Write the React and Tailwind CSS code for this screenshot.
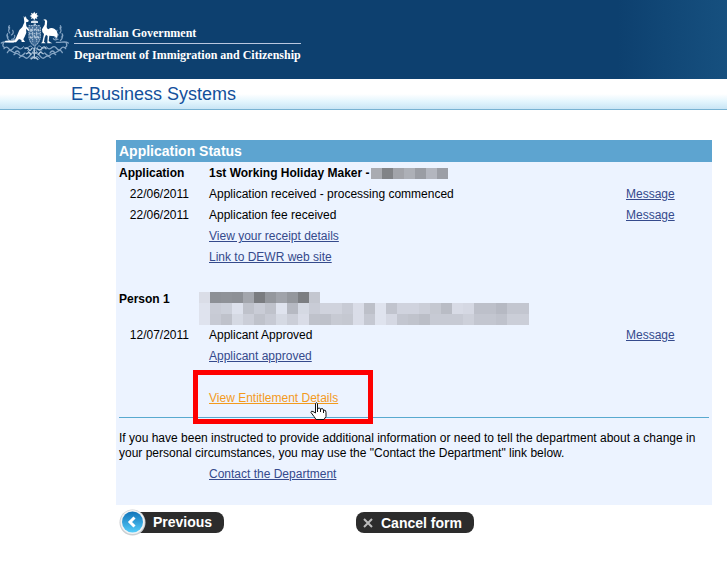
const link = 'text-[#354a8c] underline';

const nameMosaic = [['#a9abb1', '#818387', '#a2a4aa', '#adb0b7', '#9a9da4', '#b3b6bf', '#9b9ea6']];
const personMosaic = [
  ['#dadde7', '#8d9096', '#8f9298', '#8d9096', '#a3a6ad', '#7a7c80', '#94979d', '#a0a3aa', '#94979d', '#7c7e82', '#c4c7d0'],
  ['#dfe3ee', '#c9ccd6', '#ccd0da', '#dde1ec', '#bfc2cb', '#c9ccd6', '#bfc2cb', '#dfe3ee', '#b6b9c2', '#d5d9e3', '#c9ccd6', '#d0d3dd', '#d0d3dd', '#c8cbd5', '#dadde8', '#bdc0c9', '#dfe3ee', '#c1c4ce', '#d0d3de', '#d0d3de', '#cbced8', '#c5c8d1', '#b9bcc5', '#d8dbe6', '#d5d8e3', '#bdc0ca', '#bdc0ca', '#b6b9c3', '#c3c6d0', '#c3c6d0'],
  ['#dfe3ee', '#c7cad4', '#bfc2cb', '#d5d9e3', '#cbced8', '#bfc2cb', '#c7cad4', '#d5d9e3', '#cbced8', '#d9dce7', '#bfc2cb', '#bec1ca', '#c7cad3', '#c5c8d1', '#dadde8', '#c5c8d2', '#dfe3ee', '#d5d8e3', '#c3c6d0', '#c0c3cc', '#bbbec7', '#c7cad4', '#c7cad4', '#c7cad4', '#cdd0da', '#c3c6d0', '#c3c6d0', '#bfc2cc', '#cbced8', '#cbced8'],
];

function Mosaic({ rows, className }) {
  const columns = Math.max(...rows.map((row) => row.length));
  return (
    <svg className={className} width={columns * 11} height={rows.length * 11} shapeRendering="crispEdges" aria-hidden="true">
      {rows.map((row, y) =>
        row.map((fill, x) => <rect key={`${x}-${y}`} x={x * 11} y={y * 11} width="11" height="11" fill={fill} />),
      )}
    </svg>
  );
}

function Foliage() {
  return (
    <g fill="none" stroke="#86a5c4" strokeWidth="3" strokeLinecap="round">
      <path d="M4 105C14 98 25 105 40 103M10 107q-4 8 3 11M12 122q8-9 14 0t14-2q6-8 14-1t14 0M22 134q4-10 12-5t10 6q8-12 15 0M42 140q8-8 15 0t18-5M58 149q8-9 16-1t18-8" strokeWidth="4" />
      <path d="M28 98q-8-7-6-18M25 87q-8-1-2-10M29 75q-6-6 0-17M34 81q9-5 4-14M35 94q11-2 9-12M29 63q-6-4-1-10M40 95q6 2 9-3" strokeWidth="3.5" />
      <path d="M70 116q8 10 16 1t14 7q4-7 6-11M83 128l11 10 8-12M91 151q8-12 12 0" />
    </g>
  );
}

function Crest() {
  return (
    <svg className="mt-2 h-[60px] w-[75px] shrink-0" viewBox="0 0 225 180" role="img" aria-label="Australian coat of arms">
      <Foliage />
      <g transform="translate(209 0) scale(-1 1)"><Foliage /></g>
      <path d="M86 52h35v40q-3 17-17 24-15-7-18-24z" fill="#416c97" />
      <g fill="none" stroke="#b3c8dc" strokeWidth="3">
        <path d="M86 53h34M87 57v32q3 17 17 24 13-7 17-24V57M87 77h32M98 57v44M110 57v44" strokeDasharray="5 2" />
        <path d="M91 66h6M93 62v9M102 67l5-4M113 64l4 5M90 86l5 5M102 82l5 9M112 85l5 6M101 49h7" strokeWidth="5" />
      </g>
      <path d="M103 11l3 6 6-3-2 7 6 3-6 3 2 6-6-2-3 6-4-6-6 2 2-6-6-3 6-3-2-7 6 3z" fill="#fff" />
      <path d="M93 40q10-5 21 0v5H93z" fill="#d9e4ee" />
      <path d="M71 24l4 5 2-5 3 8 6 5-1 4-7 2 1 12 5 5 4 7-3 2-7-7 1 12-5 12-4 8 5 8h-10l-1-6-7-3-9 10H17l-3-3 3-2 28-1 8-19q3-13 14-21l6-14-1-9z" fill="#fff" />
      <path d="M126 42l4-6q4-4 9-1 4 3 2 12l-1 10q1 6 5 7 8-7 19-1 9 6 9 20l-2 8-7-6-8-1-8-1-2 16 5 4 6 3h-15l1-22-5-4-4 9-2 12 5 5h-14l4-4 3-14 2-10q-7-5-6-14l8-14 1-11-4-4z" fill="#fff" />
      <g fill="none" stroke="#b3c8dc" strokeWidth="4">
        <path d="M74 122q8-6 12 2t10-4M111 121q8 10 15 0t13 3M78 138l9-5 7 8M113 141l8-9 10 6M103 119v33M92 154l11-8 12 9M97 135h14" />
      </g>
    </svg>
  );
}

function Hand() {
  return (
    <svg className="h-[18px] w-[17px]" viewBox="0 0 17 18" aria-hidden="true">
      <path d="M5.5 11V1.5q1-1.5 2 0v5l2-.5 1 1 2-.5 1 1.5 2 .5.5 2v4l-2 3H6l-2-3-3-4q0-2 2-1z" fill="#fff" stroke="#111" />
      <path d="M7.500 6v4M10.500 7v3M13.500 8v3" stroke="#111" fill="none" />
    </svg>
  );
}

function Event({ date, text }) {
  return (
    <tr className="h-[21px]">
      <td className="pr-5! text-right">{date}</td>
      <td>{text}</td>
      <td><a href="#message" className={link}>Message</a></td>
    </tr>
  );
}

function LinkRow({ children }) {
  return (
    <tr className="h-[21px]">
      <td />
      <td colSpan={2}><a href="#details" className={link}>{children}</a></td>
    </tr>
  );
}

export default function App() {
  return (
    <div className="bg-white font-['Liberation_Sans',Arial,sans-serif] text-xs leading-[15px] text-black">
      <header>
        <div className="flex h-[79px] bg-[linear-gradient(to_right,#0d406f_0%,#0d406f_85%,#16507f_100%)]">
          <Crest />
          <div className="-ml-px pt-[25px] font-['Liberation_Serif',serif] text-xs leading-[17px] font-bold text-white">
            <p className="border-b border-[#b8c7df] pb-px">Australian Government</p>
            <p className="pt-[3px]">Department of Immigration and Citizenship</p>
          </div>
        </div>
        <div className="h-[31px] border-b border-[#78b2d2] bg-[linear-gradient(to_bottom,#fff_50%,#e3f5fd_75%,#c9e5f5_100%)] pl-[71px]">
          <h1 className="text-lg leading-[30px] text-[#124f9b]">E-Business Systems</h1>
        </div>
      </header>
      <main className="mt-[30px] mr-[15px] ml-[116px]">
        <section className="bg-[#ecf3ff] pb-5">
          <h2 className="bg-[#5da4d0] pl-[3px] text-sm leading-[22px] font-bold text-white">Application Status</h2>
          <table className="w-full table-fixed border-collapse [&_td]:p-0 [&_th]:p-0">
            <colgroup><col className="w-[93px]" /><col /><col className="w-[86px]" /></colgroup>
            <tbody>
              <tr className="h-[22px]">
                <th scope="row" className="pl-[3px]! text-left">Application</th>
                <td colSpan={2} className="font-bold">
                  <span className="flex items-center gap-0.5">1st Working Holiday Maker - <Mosaic rows={nameMosaic} /></span>
                </td>
              </tr>
              <Event date="22/06/2011" text="Application received - processing commenced" />
              <Event date="22/06/2011" text="Application fee received" />
              <LinkRow>View your receipt details</LinkRow>
              <LinkRow>Link to DEWR web site</LinkRow>
              <tr className="h-5"><td colSpan={3} /></tr>
              <tr className="h-[37px] align-top">
                <th scope="row" className="pt-1! pl-[3px]! text-left">Person 1</th>
                <td colSpan={2} className="pt-1!"><Mosaic rows={personMosaic} className="-ml-[10px] block max-w-none" /></td>
              </tr>
              <Event date="12/07/2011" text="Applicant Approved" />
              <LinkRow>Applicant approved</LinkRow>
              <tr className="h-[21px]"><td colSpan={3} /></tr>
            </tbody>
          </table>
          <div className="relative z-10 mx-[3px] h-[30px] border-b border-[#58a9cf] pt-[3px] pl-[90px]">
            <div className="relative w-fit">
              <a href="#entitlement" className="text-[#f39a1d] underline">View Entitlement Details</a>
              <span className="pointer-events-none absolute -top-[21px] -left-4 h-[54px] w-[180px] border-5 border-[#fe0000]" />
              <span className="pointer-events-none absolute top-[11px] left-[101px]"><Hand /></span>
            </div>
          </div>
          <p className="px-[3px] pt-[13px]">If you have been instructed to provide additional information or need to tell the department about a change in your personal circumstances, you may use the "Contact the Department" link below.</p>
          <p className="pt-[6px] pb-[3px] pl-[93px]"><a href="#contact" className={link}>Contact the Department</a></p>
        </section>
        <div className="flex gap-[132px] pt-1 pl-[3px] text-sm font-bold text-white">
          <button type="button" className="flex h-[27px] w-[105px] items-center">
            <svg className="relative z-10 size-[27px] shrink-0" viewBox="0 0 27 27" aria-hidden="true">
              <defs><linearGradient id="blue" x2="0" y2="1"><stop stopColor="#1173b9" /><stop offset="1" stopColor="#55cdfa" /></linearGradient></defs>
              <circle cx="13.500" cy="13.500" r="13" fill="#cbcfd2" /><circle cx="13.500" cy="13" r="12" fill="#f2f3f4" />
              <circle cx="13.500" cy="13" r="10.500" fill="url(#blue)" />
              <path d="M15.500 8.500 11 13l4.500 4.500" fill="none" stroke="#fff" strokeWidth="3" />
            </svg>
            <span className="-ml-3 h-[21px] grow rounded-r-lg bg-[#2c2c2c] pl-[19px] text-left leading-[20px]">Previous</span>
          </button>
          <button type="button" className="mt-[3px] flex h-[21px] w-[118px] items-center gap-2 rounded-lg bg-[#2c2c2c] pl-[7px] leading-[20px] whitespace-nowrap">
            <svg className="size-[10px] shrink-0" viewBox="0 0 10 10" aria-hidden="true"><path d="m1 1 8 8M9 1 1 9" stroke="#bcbcbc" strokeWidth="2" /></svg>
            Cancel form
          </button>
        </div>
      </main>
    </div>
  );
}
